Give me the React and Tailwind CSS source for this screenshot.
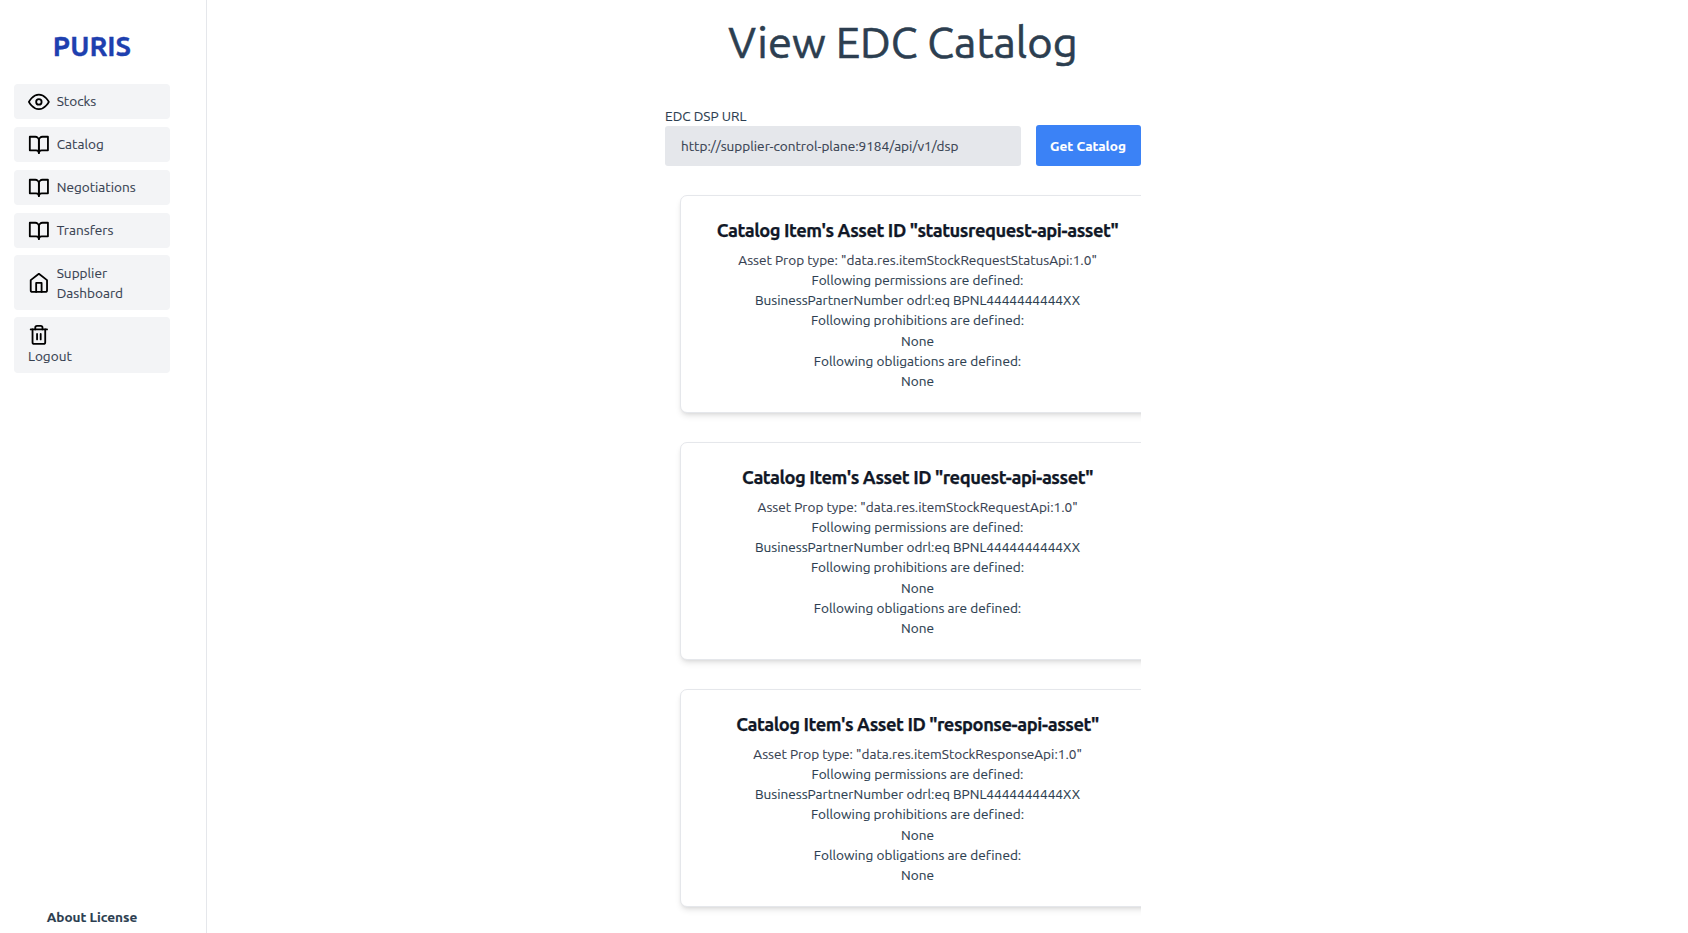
import React from "react";

const Icon = ({ children }) => (
  <svg viewBox="0 0 24 24" fill="none" stroke="black" strokeWidth="2" strokeLinecap="round" strokeLinejoin="round" className="h-[21.75px] w-[21.75px] shrink-0">
    {children}
  </svg>
);

const icons = {
  eye: (
    <>
      <path d="M1 12s4-8 11-8 11 8 11 8-4 8-11 8-11-8-11-8z" />
      <circle cx="12" cy="12" r="3" />
    </>
  ),
  book: (
    <>
      <path d="M2 3h6a4 4 0 0 1 4 4v14a3 3 0 0 0-3-3H2z" />
      <path d="M22 3h-6a4 4 0 0 0-4 4v14a3 3 0 0 1 3-3h7z" />
    </>
  ),
  home: (
    <>
      <path d="M3 9l9-7 9 7v11a2 2 0 0 1-2 2H5a2 2 0 0 1-2-2z" />
      <path d="M9 22V12h6v10" />
    </>
  ),
  trash: (
    <>
      <path d="M3 6h18" />
      <path d="M19 6v14a2 2 0 0 1-2 2H7a2 2 0 0 1-2-2V6m3 0V4a2 2 0 0 1 2-2h4a2 2 0 0 1 2 2v2" />
      <path d="M10 11v6M14 11v6" />
    </>
  ),
};

const links = [
  { label: "Stocks", icon: "eye" },
  { label: "Catalog", icon: "book" },
  { label: "Negotiations", icon: "book" },
  { label: "Transfers", icon: "book" },
];

const items = [
  { id: "statusrequest-api-asset", type: "data.res.itemStockRequestStatusApi:1.0" },
  { id: "request-api-asset", type: "data.res.itemStockRequestApi:1.0" },
  { id: "response-api-asset", type: "data.res.itemStockResponseApi:1.0" },
];

const itemClass = "flex items-center gap-[7px] rounded-[4px] bg-[#f3f4f6] pl-[14px] pr-[7px] text-[#374151]";

function Sidebar() {
  return (
    <aside className="flex w-[207px] shrink-0 flex-col border-r border-[#e5e7eb]">
      <div className="pt-[25px] pr-[22px] text-center text-[27.4px] leading-[41px] font-bold text-[#1e40af] [-webkit-text-stroke:0.3px]">PURIS</div>
      <nav className="ml-[14px] mt-[18px] flex w-[156px] flex-col gap-2">
        {links.map((l) => (
          <a key={l.label} className={`${itemClass} h-[35px]`}>
            <Icon>{icons[l.icon]}</Icon>
            {l.label}
          </a>
        ))}
        <a className={`${itemClass} -mt-px h-[55px]`}>
          <Icon>{icons.home}</Icon>
          <span className="pt-px leading-5">Supplier Dashboard</span>
        </a>
        <a className="-mt-px h-[56px] rounded-[4px] bg-[#f3f4f6] pt-[7px] pl-[14px] text-[#374151]">
          <Icon>{icons.trash}</Icon>
          Logout
        </a>
      </nav>
      <div className="mt-auto mb-[6px] pr-[22px] text-center font-bold">About License</div>
    </aside>
  );
}

function CatalogItem({ item }) {
  return (
    <li className="flex h-[218px] w-[475px] flex-col items-center rounded-[7px] border border-[#e5e7eb] bg-white pt-[21px] text-center shadow-md">
      <h5 className="mb-[5.4px] text-[18.3px] leading-[27px] font-bold tracking-tight text-[#111827] [-webkit-text-stroke:0.25px]">
        Catalog Item's Asset ID "{item.id}"
      </h5>
      <p className="text-[#374151]">Asset Prop type: "{item.type}"</p>
      <p>Following permissions are defined:</p>
      <p>BusinessPartnerNumber odrl:eq BPNL4444444444XX</p>
      <p>Following prohibitions are defined:</p>
      <p>None</p>
      <p>Following obligations are defined:</p>
      <p>None</p>
    </li>
  );
}

export default function App() {
  return (
    <div className="flex h-[933px] overflow-hidden bg-white font-[Ubuntu,'Noto_Sans',sans-serif] text-[13.6px] leading-[20.25px] text-[#2c3e50] [font-variant-ligatures:none] [-webkit-text-stroke:0.12px]">
      <Sidebar />
      <main className="flex grow flex-col items-center pr-[89px]">
        <div className="w-[476px]">
          <h1 className="mt-5 text-center text-[43.5px] leading-[43px] [-webkit-text-stroke:0.6px]">View EDC Catalog</h1>
          <div className="mt-[43px] flex items-end gap-[15px]">
            <label className="flex w-[356px] flex-col">
              EDC DSP URL
              <input
                readOnly
                defaultValue="http://supplier-control-plane:9184/api/v1/dsp"
                className="h-10 rounded-[3px] bg-[#e5e7eb] px-4 text-[#374151]"
              />
            </label>
            <button className="h-[41px] w-[105px] rounded-[3px] bg-[#3b82f6] pr-px font-bold text-white">Get Catalog</button>
          </div>
          <ul className="-ml-2 flex flex-col gap-[29px] overflow-hidden pt-[29px] pb-7 pl-[23px]">
            {items.map((item) => (
              <CatalogItem key={item.id} item={item} />
            ))}
          </ul>
        </div>
      </main>
    </div>
  );
}
